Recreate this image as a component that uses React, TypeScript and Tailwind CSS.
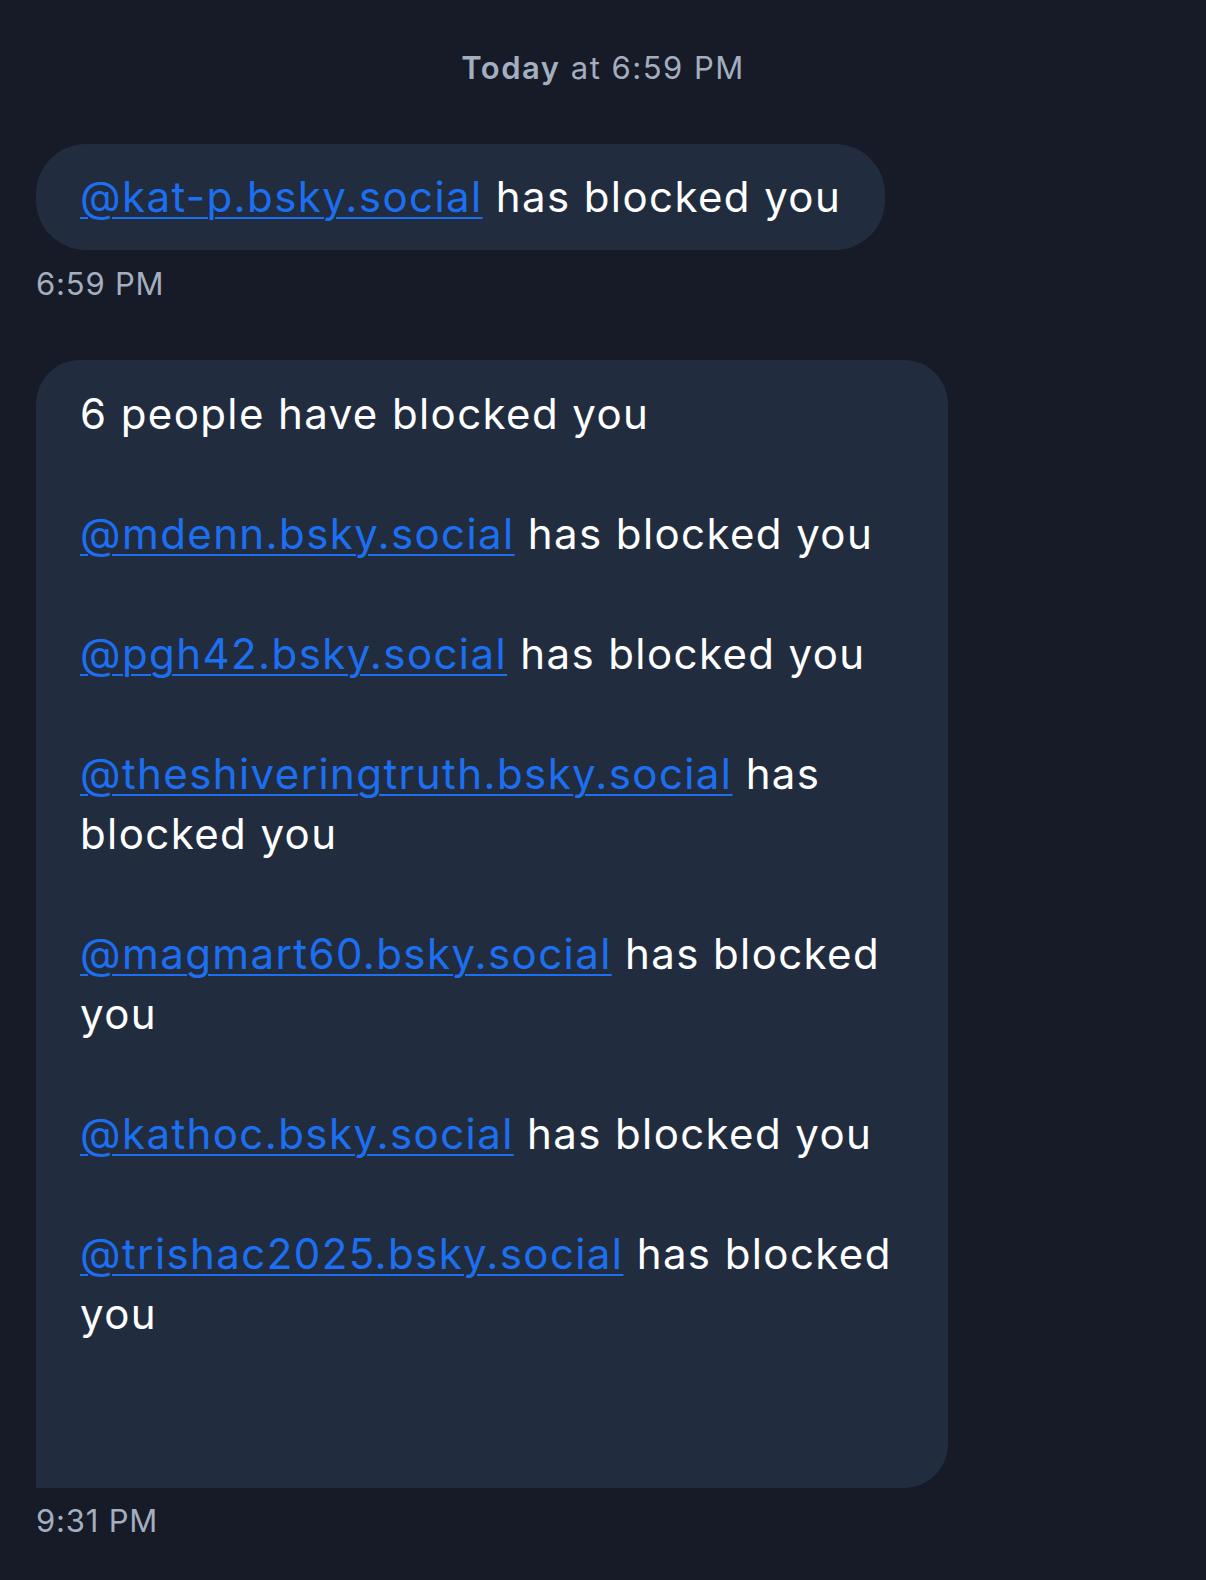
const font = { fontFamily: "Inter, 'Noto Sans', sans-serif" };

const handles = [
  ["@mdenn.bsky.social", " has blocked you"],
  ["@pgh42.bsky.social", " has blocked you"],
  ["@theshiveringtruth.bsky.social", " has", "blocked you"],
  ["@magmart60.bsky.social", " has blocked", "you"],
  ["@kathoc.bsky.social", " has blocked you"],
  ["@trishac2025.bsky.social", " has blocked", "you"],
];

function Handle({ children }: { children: string }) {
  return (
    <a href="#" className="text-[#1d6ff2] underline decoration-[2px] underline-offset-[5px]">
      {children}
    </a>
  );
}

export default function App() {
  return (
    <div className="min-h-[1580px] w-full bg-[#161b27] px-9 pt-12 text-white" style={font}>
      <div className="text-center text-[31px] leading-[40px] tracking-[1.5px] text-[#a3aec0]">
        <span className="font-semibold">Today</span> at 6:59 PM
      </div>

      <div className="mt-[56px] inline-block rounded-[50px] bg-[#212d3f] px-11 py-[23px] text-[42px] leading-[60px] tracking-[1.4px]">
        <Handle>@kat-p.bsky.social</Handle> has blocked you
      </div>
      <div className="mt-[14px] text-[31px] leading-[40px] tracking-[0.8px] text-[#a3aec0]">6:59 PM</div>

      <div className="mt-[56px] w-[912px] rounded-[44px] rounded-bl-none bg-[#212d3f] px-11 pt-6 pb-[144px] text-[42px] leading-[60px] tracking-[1.4px]">
        <div>6 people have blocked you</div>
        {handles.map(([h, rest, next]) => (
          <div key={h} className="mt-[60px]">
            <Handle>{h}</Handle>
            {rest}
            {next && (
              <>
                <br />
                {next}
              </>
            )}
          </div>
        ))}
      </div>
      <div className="mt-[13px] text-[31px] leading-[40px] tracking-[0.8px] text-[#a3aec0]">9:31 PM</div>
    </div>
  );
}
